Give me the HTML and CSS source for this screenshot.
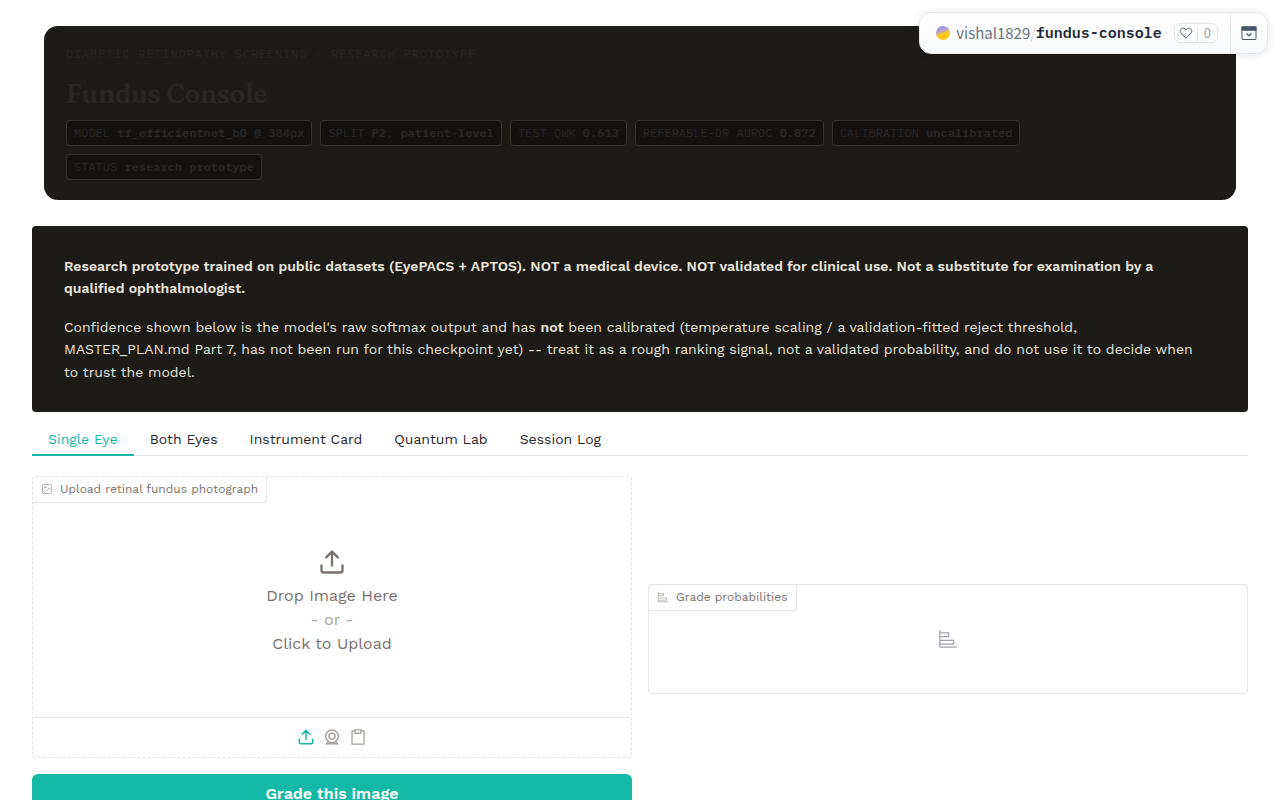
FILE: index.html
```html
<!DOCTYPE html>
<html lang="en">
<head>
<meta charset="utf-8">
<meta name="viewport" content="width=device-width, initial-scale=1">
<title>Fundus Console</title>
<link rel="stylesheet" href="styles.css">
</head>

<body>

<div class="space-bar">
  <div class="space-path">
    <span class="space-dot"></span>
    <a class="space-user" href="#">vishal1829</a>
    <span class="space-slash">/</span>
    <a class="space-name" href="#">fundus-console</a>
    <button class="like" type="button" aria-label="Like">
      <span class="like-icon">
        <svg width="14" height="14" viewBox="0 0 32 32" fill="currentColor"><path d="M22.45 6a5.47 5.47 0 0 1 3.91 1.64 5.7 5.7 0 0 1 0 8L16 26.13 5.64 15.64a5.7 5.7 0 0 1 0-8 5.48 5.48 0 0 1 7.82 0L16 10.24l2.53-2.58A5.44 5.44 0 0 1 22.45 6m0-2a7.47 7.47 0 0 0-5.34 2.24L16 7.36l-1.11-1.12a7.49 7.49 0 0 0-10.68 0 7.72 7.72 0 0 0 0 10.82L16 29l11.79-11.94a7.72 7.72 0 0 0 0-10.82A7.49 7.49 0 0 0 22.45 4Z"/></svg>
      </span>
      <span class="like-count">0</span>
    </button>
  </div>
  <button class="space-toggle" type="button" aria-label="Collapse header">
    <svg width="16" height="16" viewBox="0 0 16 16"><rect x="1" y="2" width="14" height="12.5" rx="0.5" fill="none" stroke="#475569" stroke-width="1"/><path d="M0.5 1.3h15v4.5h-15z" fill="#475569"/><path d="M5.500 8.500 8 10.700l2.500-2.200" fill="none" stroke="#475569" stroke-width="1.300"/></svg>
  </button>
</div>

<main>

<header class="console-header">
  <p class="eyebrow">DIABETIC RETINOPATHY SCREENING · RESEARCH PROTOTYPE</p>
  <h1>Fundus Console</h1>
  <ul class="pills">
    <li>MODEL <b>tf_efficientnet_b0 @ 384px</b></li>
    <li>SPLIT <b>P2, patient-level</b></li>
    <li>TEST QWK <b>0.613</b></li>
    <li>REFERABLE-DR AUROC <b>0.872</b></li>
    <li>CALIBRATION <b>uncalibrated</b></li>
    <li>STATUS <b>research prototype</b></li>
  </ul>
</header>

<section class="notice">
  <p><strong>Research prototype trained on public datasets (EyePACS + APTOS). NOT a medical device. NOT validated for clinical use. Not a substitute for examination by a qualified ophthalmologist.</strong></p>
  <p>Confidence shown below is the model's raw softmax output and has <strong>not</strong> been calibrated (temperature scaling / a validation-fitted reject threshold,<br>
  MASTER_PLAN.md Part 7, has not been run for this checkpoint yet) -- treat it as a rough ranking signal, not a validated probability, and do not use it to decide when<br>
  to trust the model.</p>
</section>

<nav class="tabs" role="tablist">
  <button class="selected" type="button" role="tab" aria-selected="true">Single Eye</button>
  <button type="button" role="tab">Both Eyes</button>
  <button type="button" role="tab">Instrument Card</button>
  <button type="button" role="tab">Quantum Lab</button>
  <button type="button" role="tab">Session Log</button>
</nav>

<div class="columns">
  <div class="column">
    <section class="block upload">
      <h2 class="block-label">
        <svg width="12" height="12" viewBox="0 0 24 24" fill="none" stroke="currentColor" stroke-width="1.5" stroke-linecap="round" stroke-linejoin="round"><rect x="3" y="3" width="18" height="18" rx="2"/><circle cx="8.500" cy="8.500" r="1.500"/><path d="M21 15l-5-5L5 21"/></svg>
        Upload retinal fundus photograph
      </h2>
      <button class="dropzone" type="button">
        <svg width="28" height="28" viewBox="0 0 24 24" fill="none" stroke="currentColor" stroke-width="2" stroke-linecap="round" stroke-linejoin="round"><path d="M21 15v4a2 2 0 0 1-2 2H5a2 2 0 0 1-2-2v-4"/><path d="M17 8l-5-5-5 5M12 3v12"/></svg>
        <span>Drop Image Here</span>
        <span class="or">- or -</span>
        <span>Click to Upload</span>
      </button>
      <div class="sources">
        <button class="selected" type="button" aria-label="Upload file">
          <svg width="18" height="18" viewBox="0 0 24 24" fill="none" stroke="currentColor" stroke-width="2" stroke-linecap="round" stroke-linejoin="round"><path d="M21 15v4a2 2 0 0 1-2 2H5a2 2 0 0 1-2-2v-4"/><path d="M17 8l-5-5-5 5M12 3v12"/></svg>
        </button>
        <button type="button" aria-label="Capture from webcam">
          <svg width="18" height="18" viewBox="0 0 24 24" fill="none" stroke="currentColor" stroke-width="2"><circle cx="12" cy="11" r="8.500"/><circle cx="12" cy="11" r="4"/><path d="M7 18l-2 3h14l-2-3"/></svg>
        </button>
        <button type="button" aria-label="Paste from clipboard">
          <svg width="18" height="18" viewBox="0 0 24 24" fill="none" stroke="currentColor" stroke-width="1.7"><path d="M8 4H4v17.500h16V4h-4"/><path d="M8 2.500h8V7H8z"/></svg>
        </button>
      </div>
    </section>
    <button class="primary" type="button">Grade this image</button>
  </div>

  <div class="column results">
    <section class="block probabilities">
      <h2 class="block-label">
        <svg width="12" height="12" viewBox="0 0 32 32" fill="currentColor"><path d="M4 2H2v26a2 2 0 0 0 2 2h26v-2H4v-3h22v-8H4v-4h14V5H4Zm20 17v4H4v-4ZM16 7v4H4V7Z"/></svg>
        Grade probabilities
      </h2>
      <div class="empty">
        <svg width="20" height="20" viewBox="0 0 32 32" fill="currentColor"><path d="M4 2H2v26a2 2 0 0 0 2 2h26v-2H4v-3h22v-8H4v-4h14V5H4Zm20 17v4H4v-4ZM16 7v4H4V7Z"/></svg>
      </div>
    </section>
  </div>
</div>

</main>

</body>
</html>
```
FILE: styles.css
```css
* {
  box-sizing: border-box;
}

body {
  margin: 0;
  background: white;
  color: #27272a;
  font-family: "Work Sans", Inter, sans-serif;
  font-size: 14px;
  line-height: 22px;
}

button {
  font: inherit;
  color: inherit;
  background: none;
  border: none;
  padding: 0;
  cursor: pointer;
}

svg {
  display: block;
  flex: none;
}

main {
  padding: 26px 32px 32px;
}

/* floating space header */
.space-bar {
  position: absolute;
  top: 12px;
  right: 12px;
  display: flex;
  height: 42px;
  border: 1px solid #e5e7eb;
  border-radius: 12px;
  background: linear-gradient(white, #f9fafb);
  box-shadow: 0 1px 8px rgba(0, 0, 0, 0.1);
}

.space-path {
  display: flex;
  align-items: center;
  padding: 0 12px 0 16px;
}

.space-path a {
  text-decoration: none;
}

.space-dot {
  width: 14px;
  height: 14px;
  margin-right: 6px;
  border-radius: 50%;
  background: linear-gradient(160deg, #818cf8, #c4a5c0 40%, #facc15 55%, #fbbf24);
}

.space-user {
  color: #6b7280;
  font-family: "Source Sans Pro", "Noto Sans CJK SC", sans-serif;
  font-size: 15px;
}

.space-slash {
  color: #d1d5db;
  font-family: "Noto Sans CJK SC", sans-serif;
}

.space-name {
  color: #1f2937;
  font-family: "IBM Plex Mono", "Liberation Mono", monospace;
  font-size: 15px;
  font-weight: 600;
}

.like {
  display: flex;
  align-items: center;
  height: 20px;
  margin-left: 12px;
  border: 1px solid #e5e7eb;
  border-radius: 6px;
  color: #6b7280;
  font-size: 13px;
  line-height: 18px;
}

.like-icon {
  padding: 2px 4px;
}

.like-count {
  padding: 0 6px;
  border-left: 1px solid #e5e7eb;
  color: #9ca3af;
  font-family: "Noto Sans CJK SC", sans-serif;
}

.space-toggle {
  padding: 0 10px;
  border-left: 1px solid #e5e7eb;
}

/* console header */
.console-header {
  margin: 0 12px 26px;
  padding: 18px 22px 20px;
  border-radius: 14px;
  background: linear-gradient(#1c1b17 95%, #1e1a18 95%);
  color: #282624;
}

.eyebrow {
  margin: 0;
  font-family: "IBM Plex Mono", "Liberation Mono", monospace;
  font-size: 12px;
  line-height: 20px;
  letter-spacing: 0.07em;
}

h1 {
  margin: 12px 0 8px;
  font-family: Fraunces, "Liberation Serif", serif;
  font-size: 26px;
  font-weight: 600;
  line-height: 36px;
}

.pills {
  display: flex;
  flex-wrap: wrap;
  gap: 8px;
  margin: 0;
  padding: 0;
  list-style: none;
}

.pills li {
  padding: 2px 7px;
  border: 1px solid #35332d;
  border-radius: 4px;
  background: #131210;
  font-family: "IBM Plex Mono", "Liberation Mono", monospace;
  font-size: 12px;
  line-height: 20px;
}

.pills b {
  font-weight: 600;
}

/* disclaimer */
.notice {
  padding: 29px 32px;
  border-radius: 4px;
  background: #1c1b17;
  color: #e8e4da;
  line-height: 1.6;
}

.notice p {
  margin: 0 0 16px;
}

.notice p:last-child {
  margin-bottom: 0;
}

.notice strong {
  font-weight: 600;
}

.tabs {
  display: flex;
  margin-top: 12px;
  border-bottom: 1px solid #e4e4e7;
}

.tabs button {
  height: 32px;
  padding: 0 16px;
  margin-bottom: -1px;
  border-bottom: 2px solid transparent;
}

.tabs .selected {
  border-color: #14b8a6;
  color: #14b8a6;
}

/* inputs on the left, results on the right */
.columns {
  display: flex;
  align-items: center;
  gap: 16px;
  margin-top: 20px;
}

.column {
  flex: 1;
  display: flex;
  flex-direction: column;
  gap: 16px;
}

.results {
  padding-bottom: 12px;
}

.block {
  display: flex;
  flex-direction: column;
  border: 1px solid #e4e4e7;
  border-radius: 4px;
}

.upload {
  border-style: dashed;
}

.block-label {
  display: flex;
  align-items: center;
  align-self: flex-start;
  gap: 7px;
  margin: 0;
  padding: 2px 8px;
  border: solid #e4e4e7;
  border-width: 0 1px 1px 0;
  border-radius: 0 0 4px 0;
  color: #78716c;
  font-size: 12px;
  font-weight: 400;
  line-height: 21px;
}

.block-label svg {
  color: #a8a29e;
}

.dropzone {
  display: flex;
  flex-direction: column;
  align-items: center;
  justify-content: center;
  min-height: 214px;
  padding-bottom: 16px;
  color: #78716c;
  font-size: 16px;
  line-height: 24px;
}

.dropzone svg {
  margin-bottom: 8px;
}

.or {
  color: #a8a29e;
}

.sources {
  display: flex;
  align-items: center;
  justify-content: center;
  gap: 8px;
  height: 40px;
  border-top: 1px solid #e4e4e7;
  color: #a8a29e;
}

.sources .selected {
  color: #14b8a6;
}

.primary {
  padding: 9px 16px;
  border-radius: 6px;
  background: #14b8a6;
  color: white;
  font-size: 16px;
  font-weight: 600;
}

.empty {
  display: flex;
  align-items: center;
  justify-content: center;
  min-height: 82px;
  padding-bottom: 26px;
  color: #a1a1aa;
}
```
